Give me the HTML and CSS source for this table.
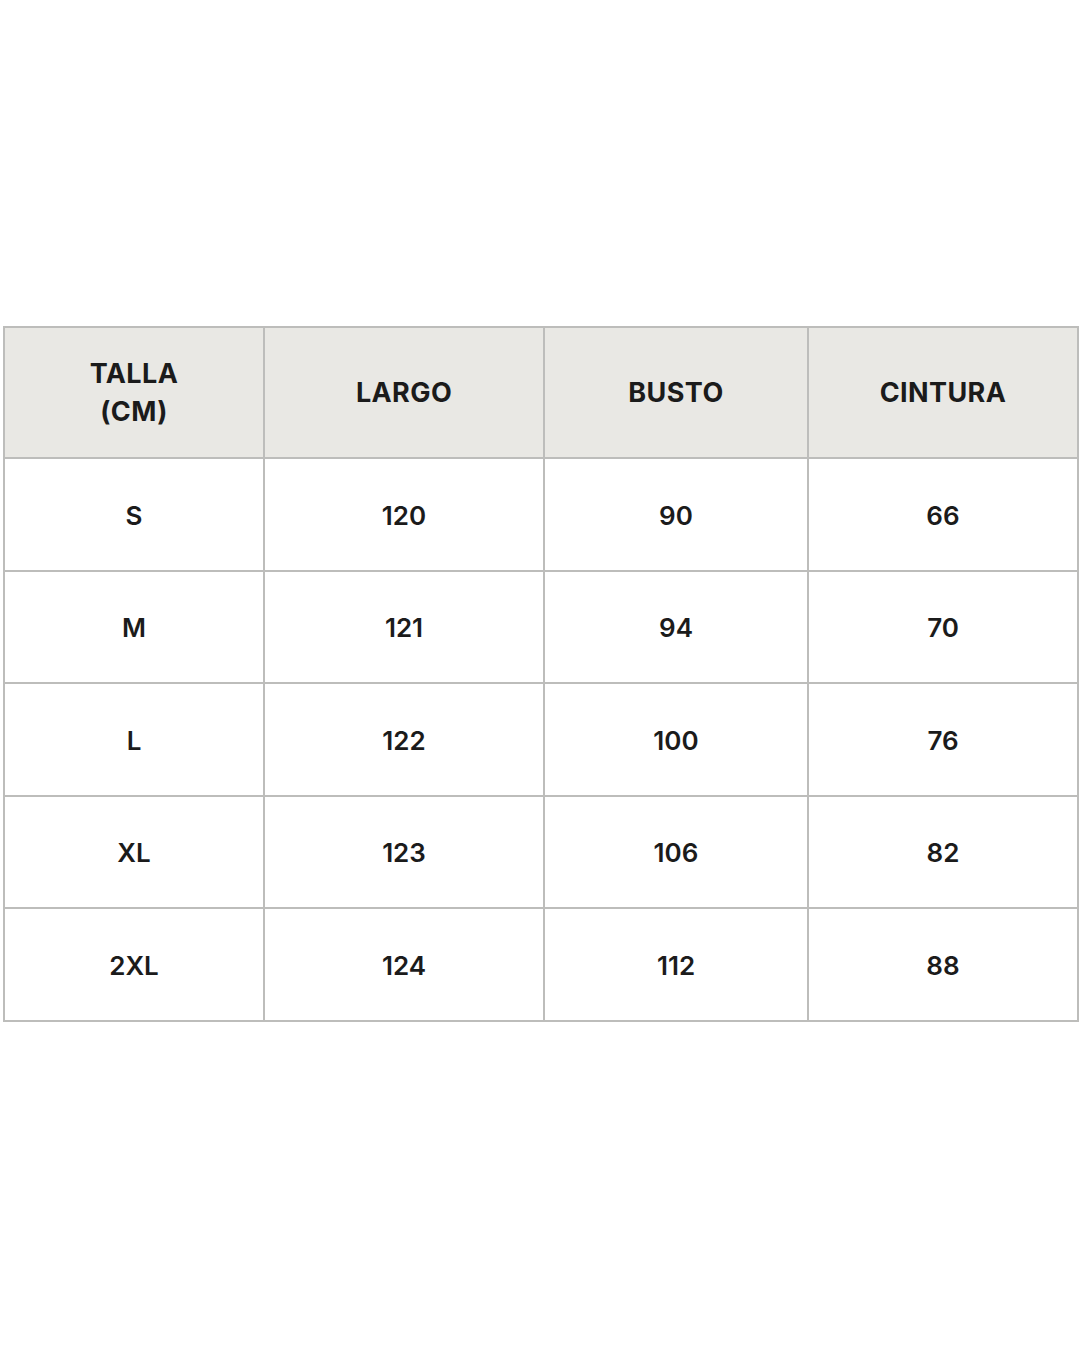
FILE: index.html
```html
<!DOCTYPE html>
<html lang="es">
<head>
<meta charset="utf-8">
<title>Tabla de tallas</title>
<link rel="stylesheet" href="styles.css">
</head>
<body>
<main class="page">
  <table class="sizes">
    <colgroup>
      <col class="c1"><col class="c2"><col class="c3"><col class="c4">
    </colgroup>
    <thead>
      <tr class="head">
        <th>TALLA<br>(CM)</th>
        <th>LARGO</th>
        <th>BUSTO</th>
        <th>CINTURA</th>
      </tr>
    </thead>
    <tbody>
      <tr class="r1"><td>S</td><td>120</td><td>90</td><td>66</td></tr>
      <tr class="r2"><td>M</td><td>121</td><td>94</td><td>70</td></tr>
      <tr class="r3"><td>L</td><td>122</td><td>100</td><td>76</td></tr>
      <tr class="r4"><td>XL</td><td>123</td><td>106</td><td>82</td></tr>
      <tr class="r5"><td>2XL</td><td>124</td><td>112</td><td>88</td></tr>
    </tbody>
  </table>
</main>
</body>
</html>
```

FILE: styles.css
```css
html, body {
  margin: 0;
  padding: 0;
  background: #ffffff;
}
.page {
  width: 1080px;
  height: 1350px;
  padding-top: 326px;
  padding-left: 3px;
  box-sizing: border-box;
}
.sizes {
  width: 1074px;
  border-collapse: collapse;
  table-layout: fixed;
  font-family: "Inter", "Liberation Sans", sans-serif;
  font-weight: 600;
  font-size: 26px;
  color: #1b1b1b;
}
.c1 { width: 260px; }
.c2 { width: 280px; }
.c3 { width: 264px; }
.c4 { width: 270px; }
.sizes th,
.sizes td {
  border: 2px solid #bdbdbb;
  text-align: center;
  vertical-align: middle;
  padding: 0;
  line-height: 38px;
}
.sizes td {
  padding-top: 2px;
}
.sizes th {
  background: #e9e8e4;
  font-weight: 700;
  font-size: 27px;
  letter-spacing: 0.4px;
  padding-top: 1px;
}
.head { height: 131px; }
.r1, .r3, .r5 { height: 113px; }
.r2, .r4 { height: 112px; }
```
